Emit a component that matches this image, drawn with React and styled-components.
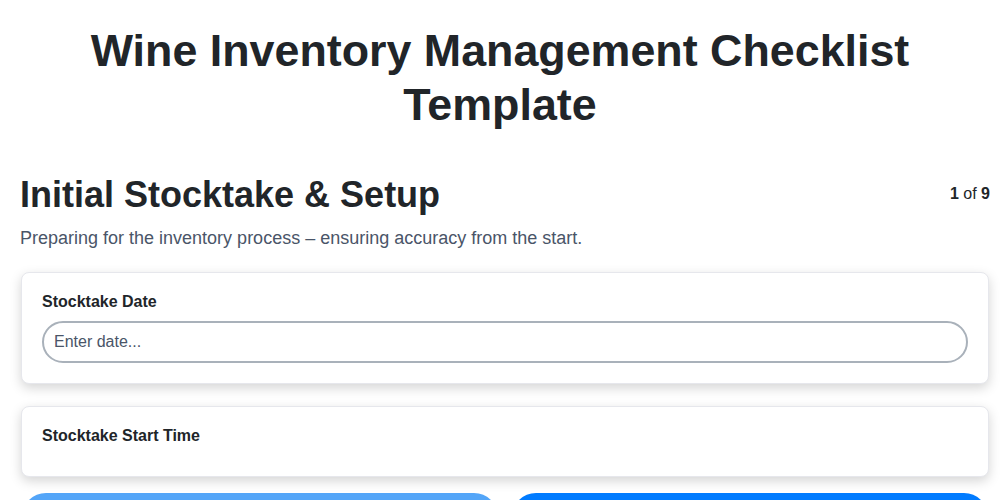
import React from 'react';
import styled, { createGlobalStyle } from 'styled-components';

const GlobalStyle = createGlobalStyle`
  html, body {
    margin: 0;
    padding: 0;
    background: #ffffff;
  }
  body {
    font-family: "Liberation Sans", Arial, sans-serif;
    color: #212529;
  }
`;

const Page = styled.div`
  padding: 24px 10px 0;
`;

const Title = styled.h1`
  margin: 0 0 41px;
  font-size: 44.8px;
  line-height: 1.2;
  font-weight: 700;
  text-align: center;
  color: #212529;
`;

const Section = styled.section`
  padding-left: 10px;
`;

const SectionHead = styled.div`
  display: flex;
  justify-content: space-between;
  align-items: center;
`;

const SectionTitle = styled.h2`
  margin: 0;
  font-size: 36px;
  line-height: 1.2;
  font-weight: 700;
  color: #212529;
`;

const Counter = styled.div`
  font-size: 16px;
  color: #212529;
  b {
    font-weight: 700;
  }
`;

const Subtitle = styled.p`
  margin: 12px 0 23px;
  font-size: 18px;
  color: #4a5568;
`;

const Card = styled.div`
  background: #fff;
  border: 1px solid #e6e7ec;
  border-radius: 8px;
  box-shadow: 0 4px 12px rgba(0, 0, 0, 0.17);
  padding: 20px 20px ${(p) => (p.$empty ? '21px' : '20px')};
  margin: 0 1px ${(p) => (p.$empty ? '16px' : '22px')};
`;

const Label = styled.label`
  display: block;
  font-size: 16px;
  font-weight: 700;
  color: #212529;
  margin-bottom: 10px;
`;

const Input = styled.input`
  box-sizing: border-box;
  display: block;
  width: 100%;
  height: 42px;
  padding: 0 10px;
  border: 2px solid #a9b1ba;
  border-radius: 21px;
  font-family: "Liberation Sans", Arial, sans-serif;
  font-size: 16px;
  color: #212529;
  outline: none;
  &::placeholder {
    color: #4a5568;
  }
`;

const Actions = styled.div`
  display: grid;
  grid-template-columns: 1fr 1fr;
  gap: 14px;
  padding: 0 2px;
`;

const Button = styled.button`
  height: 48px;
  border: none;
  border-radius: 24px;
  background: ${(p) => (p.$primary ? '#007bff' : '#53a5f8')};
  color: #fff;
  font-family: "Liberation Sans", Arial, sans-serif;
  font-size: 16px;
  font-weight: 700;
`;

export default function App() {
  return (
    <>
      <GlobalStyle />
      <Page>
        <Title>Wine Inventory Management Checklist Template</Title>
        <Section>
          <SectionHead>
            <SectionTitle>Initial Stocktake &amp; Setup</SectionTitle>
            <Counter>
              <b>1</b> of <b>9</b>
            </Counter>
          </SectionHead>
          <Subtitle>
            Preparing for the inventory process – ensuring accuracy from the start.
          </Subtitle>
          <Card>
            <Label>Stocktake Date</Label>
            <Input placeholder="Enter date..." />
          </Card>
          <Card $empty>
            <Label>Stocktake Start Time</Label>
          </Card>
          <Actions>
            <Button>Previous</Button>
            <Button $primary>Next</Button>
          </Actions>
        </Section>
      </Page>
    </>
  );
}
